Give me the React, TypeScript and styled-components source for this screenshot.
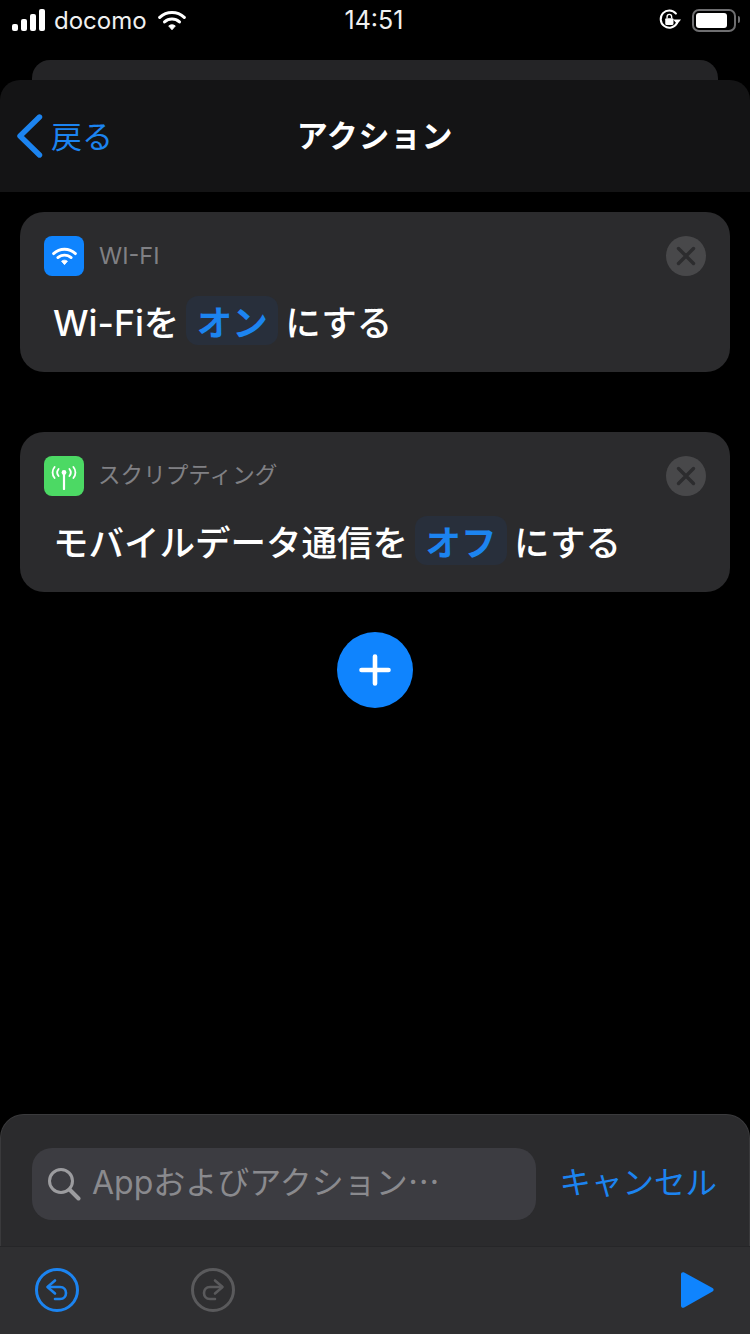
import React from 'react';
import styled, {createGlobalStyle} from 'styled-components';

const BLUE = '#1c84f0';
const FONT = '"Inter", "Noto Sans CJK JP", sans-serif';

const GlobalStyle = createGlobalStyle`
    html, body {
        margin: 0;
        padding: 0;
        background: #000;
    }
    body {
        font-family: ${FONT};
    }
`;

const Page = styled.div`
    width: 750px;
    height: 1334px;
    display: flex;
    flex-direction: column;
    background: #000;
    overflow: hidden;
`;

const StatusBar = styled.div`
    height: 40px;
    padding: 0 14px 0 12px;
    display: grid;
    grid-template-columns: 1fr auto 1fr;
    align-items: center;
    color: #fff;
    font-size: 24px;
`;

const StatusLeft = styled.div`
    display: flex;
    align-items: center;
    gap: 8px;
`;

const Carrier = styled.span`
    font-size: 24px;
    margin-right: 3px;
    color: #f0f0f0;
`;

const Clock = styled.span`
    font-size: 25px;
    color: #f0f0f0;
`;

const StatusRight = styled.div`
    display: flex;
    align-items: center;
    justify-content: flex-end;
    gap: 11px;
`;

const Battery = styled.div`
    width: 36px;
    height: 15px;
    padding: 2px;
    border: 2px solid #6e6e70;
    border-radius: 7px;
    position: relative;
    box-sizing: content-box;

    &:after {
        content: '';
        position: absolute;
        right: -6px;
        top: 5px;
        width: 2px;
        height: 7px;
        border-radius: 0 2px 2px 0;
        background: #6e6e70;
    }
`;

const BatteryFill = styled.div`
    width: 86%;
    height: 100%;
    background: #fff;
    border-radius: 3px;
`;

const BackSheet = styled.div`
    height: 20px;
    margin: 20px 32px 0;
    background: #242426;
    border-radius: 18px 18px 0 0;
`;

const NavBar = styled.div`
    height: 112px;
    padding: 0 16px;
    display: grid;
    grid-template-columns: 1fr auto 1fr;
    align-items: center;
    background: #141415;
    border-radius: 20px 20px 0 0;
`;

const BackLink = styled.div`
    display: flex;
    align-items: center;
    gap: 7px;
    color: ${BLUE};
    font-size: 31px;
`;

const BackLabel = styled.span`
    margin-bottom: 4px;
`;

const Title = styled.div`
    margin-bottom: 5px;
    color: #fff;
    font-size: 31px;
    font-weight: 600;
    letter-spacing: 0.6px;
`;

const Content = styled.div`
    flex: 1;
    padding: 20px 20px 0;
    display: flex;
    flex-direction: column;
    gap: 60px;
`;

const Card = styled.div`
    height: 160px;
    box-sizing: border-box;
    padding: 24px 24px 0;
    background: #2b2b2d;
    border-radius: 24px;
    position: relative;
`;

const CardHeader = styled.div`
    display: flex;
    align-items: center;
    gap: 15px;
    height: 40px;
`;

const AppIcon = styled.div<{$color: string}>`
    width: 40px;
    height: 40px;
    border-radius: 8px;
    background: ${(p) => p.$color};
    display: flex;
    align-items: center;
    justify-content: center;
`;

const AppName = styled.span<{$cjk?: boolean}>`
    margin-left: ${(p) => (p.$cjk ? '-1px' : '0')};
    margin-bottom: ${(p) => (p.$cjk ? '6px' : '2px')};
    color: #808084;
    font-size: ${(p) => (p.$cjk ? '22.6px' : '23.5px')};
`;

const CloseButton = styled.div`
    position: absolute;
    top: 24px;
    right: 24px;
    width: 40px;
    height: 40px;
    border-radius: 50%;
    background: #48484a;
    display: flex;
    align-items: center;
    justify-content: center;
`;

const Sentence = styled.div`
    margin-top: 20px;
    padding-left: 9px;
    height: 49px;
    display: flex;
    align-items: center;
    gap: 7px;
    color: #fff;
    font-size: 35.5px;
    font-weight: 500;
`;

const Token = styled.span`
    height: 49px;
    padding: 0 10.5px;
    display: flex;
    align-items: center;
    border-radius: 12px;
    background: #282f3b;
    color: ${BLUE};
    font-weight: 600;
`;

const AddRow = styled.div`
    margin-top: -20px;
    display: flex;
    justify-content: center;
`;

const AddButton = styled.div`
    width: 76px;
    height: 76px;
    border-radius: 50%;
    background: #0f84fe;
    display: flex;
    align-items: center;
    justify-content: center;
`;

const SearchPanel = styled.div`
    height: 132px;
    box-sizing: border-box;
    padding: 33px 32px 0 31px;
    display: flex;
    gap: 23px;
    background: #2b2b2d;
    border: 1px solid #3a3a3c;
    border-bottom: none;
    border-radius: 24px 24px 0 0;
`;

const SearchField = styled.div`
    flex: 1;
    height: 72px;
    padding-left: 15px;
    display: flex;
    align-items: center;
    gap: 11px;
    background: #3c3c41;
    border-radius: 20px;
    color: #8a8a8e;
    font-size: 32px;
`;

const Placeholder = styled.span`
    margin-bottom: 8px;
`;

const Ellipsis = styled.span`
    font-family: "Noto Sans CJK JP", sans-serif;
`;

const CancelLink = styled.span`
    height: 72px;
    padding-bottom: 8px;
    box-sizing: border-box;
    display: flex;
    align-items: center;
    color: ${BLUE};
    font-size: 31.5px;
`;

const Toolbar = styled.div`
    height: 88px;
    padding: 0 35px 2px;
    display: flex;
    align-items: center;
    background: #2f2f31;
    border-top: 1px solid #262628;
    box-sizing: border-box;
`;

const ToolSpacer = styled.div`
    flex: 1;
`;

const RedoSlot = styled.div`
    margin-left: 112px;
    display: flex;
`;

const WifiGlyph = ({size, color}: {size: number; color: string}) => (
    <svg width={size} height={(size * 3) / 4} viewBox="0 0 32 24" fill="none">
        <path d="M2 8.5C10 1 22 1 30 8.5" stroke={color} strokeWidth="3.6" strokeLinecap="round" />
        <path d="M7.5 13.6C12.5 9.2 19.5 9.2 24.5 13.6" stroke={color} strokeWidth="3.6" strokeLinecap="round" />
        <path d="M12.2 18.2C14.5 16.4 17.5 16.4 19.8 18.2L16 22.6Z" fill={color} stroke={color} strokeLinejoin="round" />
    </svg>
);

const SignalBars = () => (
    <svg width="34" height="22" viewBox="0 0 34 22" fill="#fff">
        <rect x="0" y="15" width="6" height="7" rx="2" />
        <rect x="9" y="10" width="6" height="12" rx="2" />
        <rect x="18" y="5" width="6" height="17" rx="2" />
        <rect x="27" y="0" width="6" height="22" rx="2" />
    </svg>
);

const RotationLock = () => (
    <svg width="22" height="22" viewBox="0 0 24 24" fill="none">
        <path d="M19.5 15.5A9.4 9.4 0 1 1 18.5 5" stroke="#fff" strokeWidth="2.2" strokeLinecap="round" />
        <path d="M15.5 11.5H24L19.8 16.5Z" fill="#fff" />
        <rect x="6.8" y="10" width="9" height="7.4" rx="1.2" fill="#fff" />
        <path d="M8.8 10V8.4A2.5 2.5 0 0 1 13.8 8.4V10" stroke="#fff" strokeWidth="1.5" />
    </svg>
);

const Chevron = () => (
    <svg width="28" height="44" viewBox="0 0 28 44" fill="none">
        <path d="M23.5 3L4 22L23.5 41" stroke={BLUE} strokeWidth="5.4" strokeLinecap="round" strokeLinejoin="round" />
    </svg>
);

const Antenna = () => (
    <svg width="26" height="24" viewBox="0 0 26 24" fill="none" stroke="#fff" strokeLinecap="round" style={{marginTop: 3}}>
        <circle cx="13" cy="6.5" r="2.4" fill="#fff" stroke="none" />
        <path d="M13 7V23" strokeWidth="2.2" />
        <path d="M7.6 3C6 5 6 8 7.6 10" strokeWidth="1.8" />
        <path d="M18.4 3C20 5 20 8 18.4 10" strokeWidth="1.8" />
        <path d="M3.6 1C.9 4.2 .9 8.8 3.6 12" strokeWidth="1.8" />
        <path d="M22.4 1C25.1 4.2 25.1 8.8 22.4 12" strokeWidth="1.8" />
    </svg>
);

const CloseGlyph = () => (
    <svg width="20" height="20" viewBox="0 0 20 20" fill="none">
        <path d="M2.5 2.5L17.5 17.5M17.5 2.5L2.5 17.5" stroke="#2c2c2e" strokeWidth="3.4" strokeLinecap="round" />
    </svg>
);

const PlusGlyph = () => (
    <svg width="32" height="32" viewBox="0 0 32 32" fill="none">
        <path d="M16 2.5V29.5M2.5 16H29.5" stroke="#fff" strokeWidth="4.6" strokeLinecap="round" />
    </svg>
);

const SearchGlyph = () => (
    <svg width="34" height="34" viewBox="0 0 34 34" fill="none" stroke="#9c9c9f">
        <circle cx="14" cy="14" r="11.5" strokeWidth="3" />
        <path d="M22.5 22.5L31.5 31.5" strokeWidth="4" strokeLinecap="round" />
    </svg>
);

const UndoGlyph = ({color, flip}: {color: string; flip?: boolean}) => (
    <svg width="44" height="44" viewBox="0 0 44 44" fill="none" stroke={color} strokeLinecap="round" strokeLinejoin="round">
        <circle cx="22" cy="22" r="20.5" strokeWidth="3" />
        <g transform={flip ? 'matrix(-1 0 0 1 44 0)' : undefined}>
            <path d="M20 12.5L12.5 19L20 25.5" strokeWidth="2.6" />
            <path d="M13 19H25C29 19 31 21.8 31 25C31 28.2 29 31 25 31H20" strokeWidth="2.6" />
        </g>
    </svg>
);

const PlayGlyph = () => (
    <svg width="36" height="38" viewBox="0 0 36 38" fill="#0f84fe">
        <path d="M2 3.5C2 1.5 3.6 .6 5.2 1.5L33.5 17C35 17.9 35 19.6 33.5 20.5L5.2 36.5C3.6 37.4 2 36.5 2 34.5Z" />
    </svg>
);

const App = () => (
    <Page>
        <GlobalStyle />
        <StatusBar>
            <StatusLeft>
                <SignalBars />
                <Carrier>docomo</Carrier>
                <WifiGlyph size={28} color="#fff" />
            </StatusLeft>
            <Clock>14:51</Clock>
            <StatusRight>
                <RotationLock />
                <Battery>
                    <BatteryFill />
                </Battery>
            </StatusRight>
        </StatusBar>
        <BackSheet />
        <NavBar>
            <BackLink>
                <Chevron />
                <BackLabel>戻る</BackLabel>
            </BackLink>
            <Title>アクション</Title>
        </NavBar>
        <Content>
            <Card>
                <CardHeader>
                    <AppIcon $color="#0f84fe">
                        <WifiGlyph size={25} color="#fff" />
                    </AppIcon>
                    <AppName>WI-FI</AppName>
                </CardHeader>
                <CloseButton>
                    <CloseGlyph />
                </CloseButton>
                <Sentence>
                    Wi-Fiを<Token>オン</Token>にする
                </Sentence>
            </Card>
            <Card>
                <CardHeader>
                    <AppIcon $color="#4cd964">
                        <Antenna />
                    </AppIcon>
                    <AppName $cjk>スクリプティング</AppName>
                </CardHeader>
                <CloseButton>
                    <CloseGlyph />
                </CloseButton>
                <Sentence>
                    モバイルデータ通信を<Token>オフ</Token>にする
                </Sentence>
            </Card>
            <AddRow>
                <AddButton>
                    <PlusGlyph />
                </AddButton>
            </AddRow>
        </Content>
        <SearchPanel>
            <SearchField>
                <SearchGlyph />
                <Placeholder>
                    Appおよびアクション<Ellipsis>…</Ellipsis>
                </Placeholder>
            </SearchField>
            <CancelLink>キャンセル</CancelLink>
        </SearchPanel>
        <Toolbar>
            <UndoGlyph color={BLUE} />
            <RedoSlot>
                <UndoGlyph color="#5a5a5c" flip />
            </RedoSlot>
            <ToolSpacer />
            <PlayGlyph />
        </Toolbar>
    </Page>
);

export default App;
